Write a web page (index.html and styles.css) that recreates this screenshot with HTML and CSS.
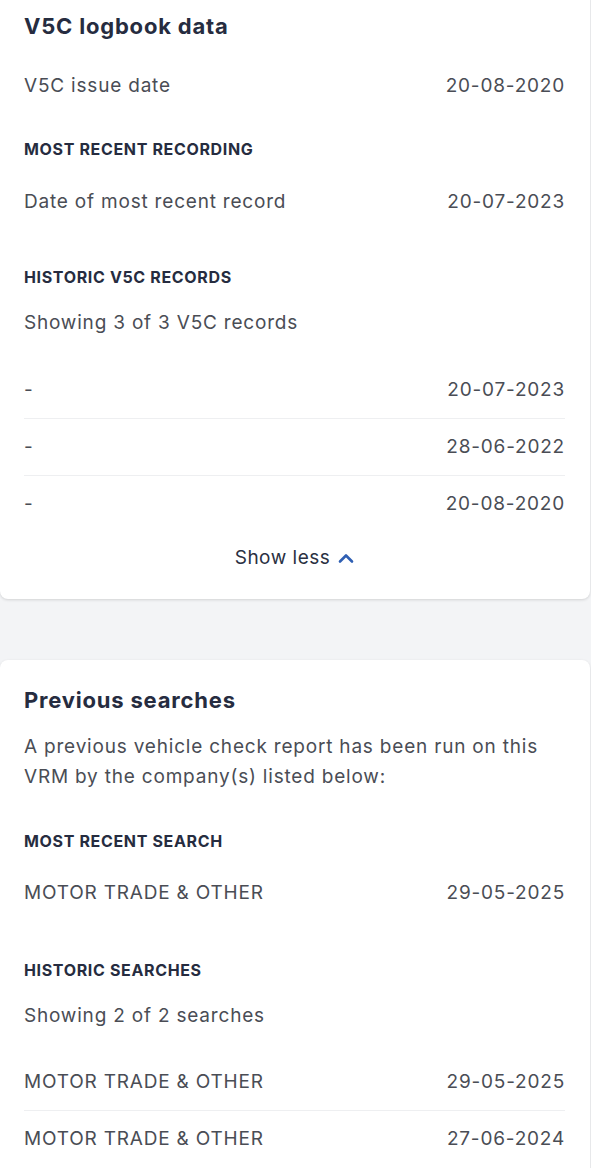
FILE: index.html
```html
<!DOCTYPE html>
<html>
<head>
<meta charset="utf-8">
<link rel="stylesheet" href="styles.css">
</head>
<body>
<section class="card card-first">
  <h2 class="card-title">V5C logbook data</h2>
  <div class="row row-first"><span>V5C issue date</span><span>20-08-2020</span></div>
  <h3 class="label label-a">MOST RECENT RECORDING</h3>
  <div class="row row-a"><span>Date of most recent record</span><span>20-07-2023</span></div>
  <h3 class="label label-b">HISTORIC V5C RECORDS</h3>
  <p class="count">Showing 3 of 3 V5C records</p>
  <ul class="list">
    <li class="row"><span>-</span><span>20-07-2023</span></li>
    <li class="row"><span>-</span><span>28-06-2022</span></li>
    <li class="row"><span>-</span><span>20-08-2020</span></li>
  </ul>
  <button class="toggle">Show less
    <svg width="16" height="12" viewBox="0 0 16 12"><path d="M2 9.5 L8 3.5 L14 9.5" fill="none" stroke="#2f5fb3" stroke-width="2.6" stroke-linecap="round" stroke-linejoin="round"/></svg>
  </button>
</section>

<section class="card card-second">
  <h2 class="card-title">Previous searches</h2>
  <p class="intro">A previous vehicle check report has been run on this VRM by the company(s) listed below:</p>
  <h3 class="label label-c">MOST RECENT SEARCH</h3>
  <div class="row row-c"><span>MOTOR TRADE &amp; OTHER</span><span>29-05-2025</span></div>
  <h3 class="label label-d">HISTORIC SEARCHES</h3>
  <p class="count">Showing 2 of 2 searches</p>
  <ul class="list list-d">
    <li class="row"><span>MOTOR TRADE &amp; OTHER</span><span>29-05-2025</span></li>
    <li class="row"><span>MOTOR TRADE &amp; OTHER</span><span>27-06-2024</span></li>
  </ul>
</section>
</body>
</html>
```

FILE: styles.css
```css
* { box-sizing: border-box; }
html, body { margin: 0; padding: 0; }
body {
  background: #f3f4f6;
  font-family: Inter, "Noto Sans", sans-serif;
  color: #4a4d55;
  width: 591px;
}
.card {
  background: #fff;
  width: 590px;
  border-radius: 8px;
  box-shadow: 0 1px 3px rgba(0,0,0,0.14);
  padding: 0 25px 0 24px;
}
.card-first {
  margin-top: -8px;
  padding-top: 19px;
  padding-bottom: 28px;
}
.card-second {
  margin-top: 61px;
  padding-top: 25px;
  padding-bottom: 40px;
}
.card-title {
  margin: 0;
  font-size: 22px;
  line-height: 30px;
  font-weight: 700;
  color: #262c40;
  letter-spacing: 0.8px;
}
.row {
  display: flex;
  justify-content: space-between;
  font-size: 19px;
  line-height: 26px;
  color: #4a4d55;
  letter-spacing: 0.8px;
}
.row-first { margin-top: 32px; }
.label {
  margin: 0;
  font-size: 16px;
  line-height: 22px;
  font-weight: 700;
  color: #262c40;
  letter-spacing: 0.65px;
}
.label-a { margin-top: 39px; }
.label-b { margin-top: 51px; }
.label-c { margin-top: 38px; }
.label-d { margin-top: 53px; }
.row-a { margin-top: 29px; }
.row-c { margin-top: 28px; }
.count {
  margin: 22px 0 0;
  font-size: 19px;
  line-height: 26px;
  letter-spacing: 0.8px;
}
.intro {
  margin: 17px 0 0;
  font-size: 19px;
  line-height: 30px;
  color: #4a4d55;
  letter-spacing: 0.8px;
}
.list {
  list-style: none;
  margin: 41px 0 0;
  padding: 0;
}
.list-d { margin-top: 40px; }
.list .row {
  padding: 0 0 15px;
}
.list .row + .row {
  border-top: 1px solid #eeeff1;
  padding-top: 15px;
}
.toggle {
  display: flex;
  align-items: center;
  justify-content: center;
  gap: 8px;
  margin: 13px auto 0;
  border: 0;
  background: none;
  font-family: inherit;
  font-size: 19px;
  line-height: 26px;
  color: #2a3042;
  letter-spacing: 0.5px;
  padding: 0;
}
```
